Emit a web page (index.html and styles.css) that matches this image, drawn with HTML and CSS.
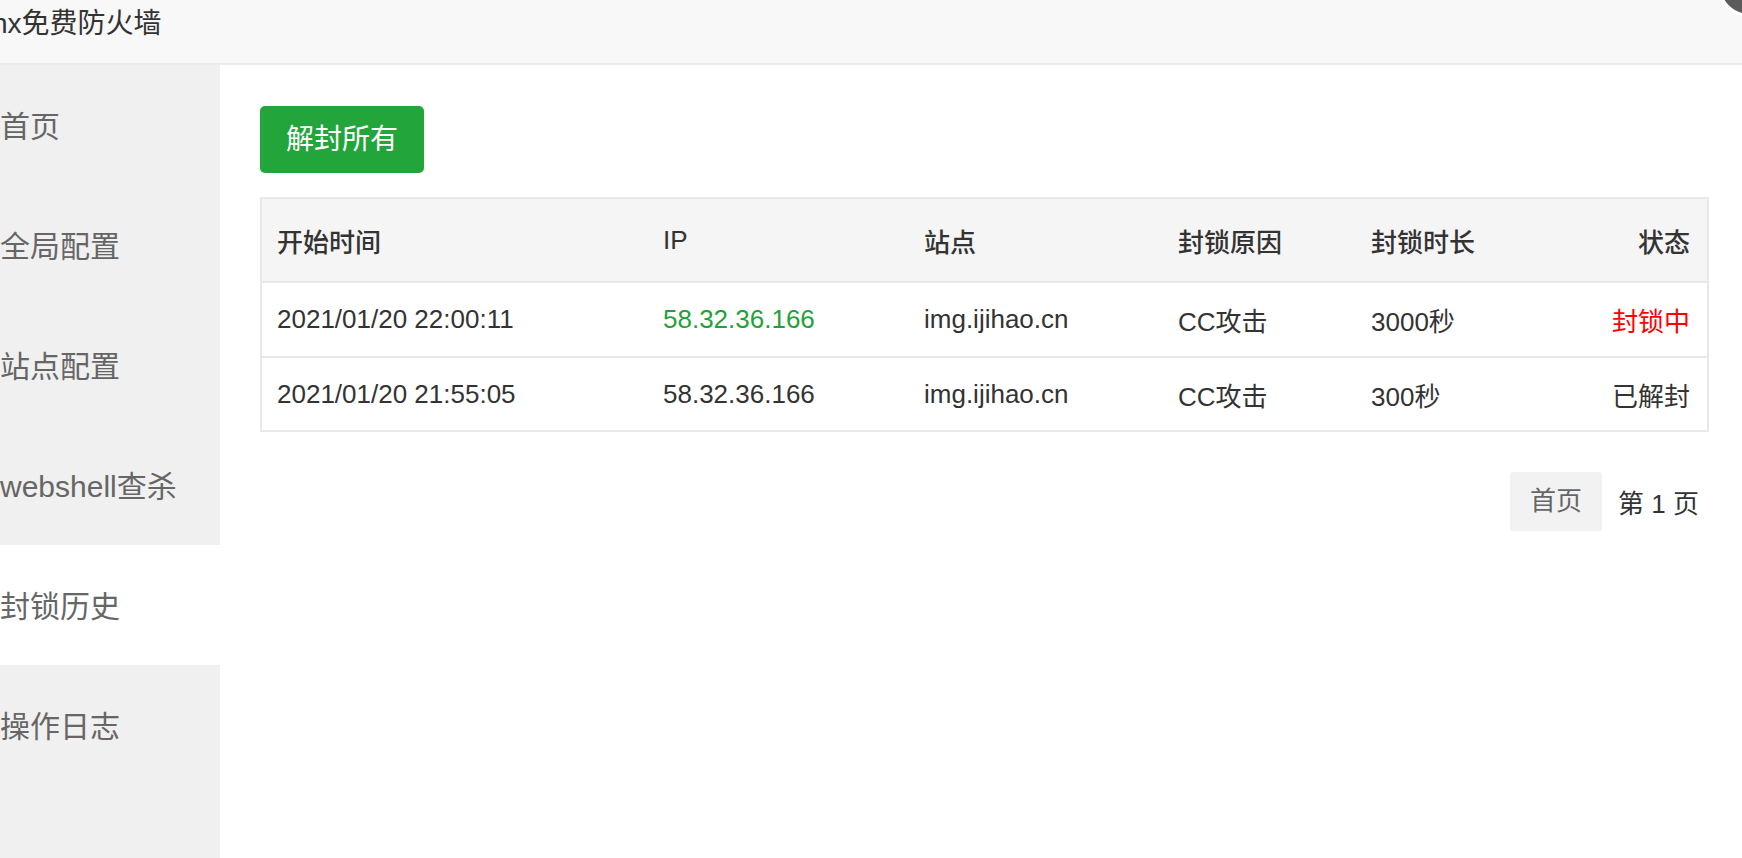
FILE: index.html
```html
<!DOCTYPE html>
<html lang="zh-CN">
<head>
<meta charset="utf-8">
<title>封锁历史</title>
<link rel="stylesheet" href="styles.css">
</head>
<body>
<div class="layer">
  <div class="layer-title"><span class="title-text">nx免费防火墙</span></div>
  <span class="layer-close"></span>
  <div class="layer-body">
    <ul class="side-menu">
      <li class="menu-item">首页</li>
      <li class="menu-item">全局配置</li>
      <li class="menu-item">站点配置</li>
      <li class="menu-item">webshell查杀</li>
      <li class="menu-item active">封锁历史</li>
      <li class="menu-item">操作日志</li>
    </ul>
    <div class="content">
      <div class="toolbar">
        <button class="btn-green" type="button">解封所有</button>
      </div>
      <table class="data-table">
        <colgroup>
          <col class="c1"><col class="c2"><col class="c3"><col class="c4"><col class="c5"><col class="c6">
        </colgroup>
        <thead>
          <tr>
            <th>开始时间</th>
            <th>IP</th>
            <th>站点</th>
            <th>封锁原因</th>
            <th>封锁时长</th>
            <th class="right">状态</th>
          </tr>
        </thead>
        <tbody>
          <tr>
            <td>2021/01/20 22:00:11</td>
            <td class="ip-green">58.32.36.166</td>
            <td>img.ijihao.cn</td>
            <td>CC攻击</td>
            <td>3000秒</td>
            <td class="right status-red">封锁中</td>
          </tr>
          <tr class="last">
            <td>2021/01/20 21:55:05</td>
            <td>58.32.36.166</td>
            <td>img.ijihao.cn</td>
            <td>CC攻击</td>
            <td>300秒</td>
            <td class="right">已解封</td>
          </tr>
        </tbody>
      </table>
      <div class="pager">
        <span class="page-btn">首页</span>
        <span class="page-info">第 1 页</span>
      </div>
    </div>
  </div>
</div>
</body>
</html>
```

FILE: styles.css
```css
* {
  box-sizing: border-box;
}

html, body {
  margin: 0;
  padding: 0;
  width: 1742px;
  height: 858px;
  overflow: hidden;
  background: #ffffff;
}

body {
  font-family: "Liberation Sans", "Noto Sans CJK SC", sans-serif;
  color: #333333;
}

.layer {
  position: relative;
  width: 1742px;
  height: 858px;
  display: flex;
  flex-direction: column;
}

.layer-title {
  height: 65px;
  background: #f8f8f8;
  border-bottom: 2px solid #ebebeb;
  font-size: 28px;
  line-height: 48px;
  color: #333333;
  white-space: nowrap;
  flex: none;
}

.title-text {
  display: inline-block;
  margin-left: -8px;
}

.layer-close {
  position: absolute;
  left: 1717px;
  top: -49px;
  width: 66px;
  height: 66px;
  border-radius: 50%;
  background: #5b5b5b;
  border: 3px solid #ffffff;
}

.layer-body {
  flex: 1;
  display: flex;
  min-height: 0;
}

.side-menu {
  list-style: none;
  margin: 0;
  padding: 0;
  width: 220px;
  flex: none;
  background: #f0f0f0;
}

.menu-item {
  height: 120px;
  padding-top: 4px;
  line-height: 116px;
  font-size: 30px;
  color: #666666;
  padding-left: 0;
  white-space: nowrap;
}

.menu-item.active {
  background: #ffffff;
}

.content {
  flex: 1;
  padding: 41px 33px 0 40px;
}

.toolbar {
  display: flex;
}

.btn-green {
  height: 67px;
  padding: 0 26px;
  border: none;
  border-radius: 5px;
  background: #22a53b;
  color: #ffffff;
  font-family: inherit;
  font-size: 28px;
  line-height: 67px;
}

.data-table {
  margin-top: 24px;
  width: 100%;
  table-layout: fixed;
  border-collapse: separate;
  border-spacing: 0;
  border: 2px solid #e8e8e8;
  font-size: 26px;
}

.c1 { width: 384px; }
.c2 { width: 261px; }
.c3 { width: 254px; }
.c4 { width: 193px; }
.c5 { width: 176px; }

.data-table th,
.data-table td {
  padding: 0 17px;
  text-align: left;
  white-space: nowrap;
  border-bottom: 2px solid #e8e8e8;
}

.data-table th:first-child,
.data-table td:first-child {
  padding-left: 15px;
}

.data-table th {
  height: 84px;
  background: #f5f5f5;
  font-weight: 500;
  color: #333333;
}

.data-table td {
  height: 75px;
  color: #333333;
}

.data-table tr.last td {
  border-bottom: none;
  height: 72px;
}

.data-table .right {
  text-align: right;
}

.ip-green {
  color: #1fa23a !important;
}

.status-red {
  color: #ff0000 !important;
}

.pager {
  margin-top: 40px;
  display: flex;
  justify-content: flex-end;
  align-items: center;
  gap: 16px;
  padding-right: 10px;
  font-size: 26px;
}

.page-btn {
  height: 59px;
  line-height: 59px;
  padding: 0 20px;
  background: #f2f2f2;
  border-radius: 3px;
  color: #666666;
}

.page-info {
  color: #333333;
}
```
